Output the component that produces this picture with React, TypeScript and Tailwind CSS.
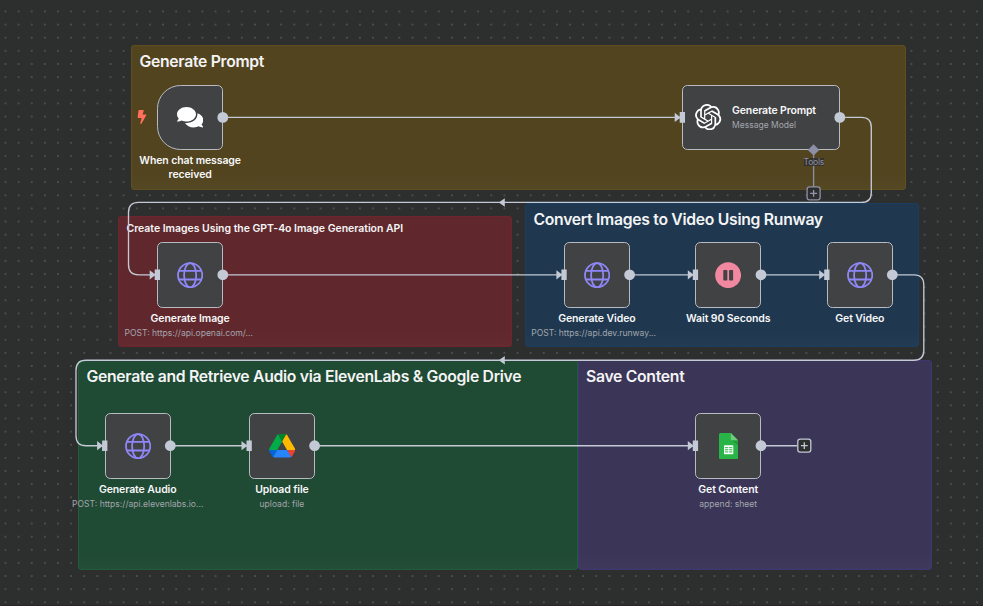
import type { ReactNode } from "react";
import { FaBolt, FaComments } from "react-icons/fa";
import { SiOpenai } from "react-icons/si";

const S = 65.67;

type Box = { x: number; y: number; w: number; h: number };

function Sticky({ x, y, w, h, color, title, small = false }: Box & { color: string; title: string; small?: boolean }) {
  return (
    <section className={`absolute flex flex-col justify-between rounded-[3px] border ${color}`} style={{ left: x, top: y, width: w, height: h }}>
      <h2
        className={`whitespace-nowrap px-[7.5px] font-semibold text-[#f4f4f5] ${
          small ? "pt-[5px] text-[10.5px] leading-[13px] tracking-[-0.04px]" : "pt-[6px] text-[15.75px] leading-[20px] tracking-[-0.3px]"
        }`}
      >
        {title}
      </h2>
      <div className="h-4 bg-linear-to-b from-white/0 to-white/2" />
    </section>
  );
}

function Globe() {
  return (
    <svg viewBox="0 0 26 26" className="size-[26.3px]" fill="none" stroke="#8f87f7" strokeWidth="1.75">
      <circle cx="13" cy="13" r="12" />
      <ellipse cx="13" cy="13" rx="6" ry="12" />
      <path d="M1.8 8.7h22.4M1.8 17.3h22.4" />
    </svg>
  );
}

function Pause() {
  return (
    <svg viewBox="0 0 26 26" className="size-[26.3px]">
      <circle cx="13" cy="13" r="12.8" fill="#f188a2" />
      <rect x="8.2" y="7.9" width="4" height="10.3" rx=".7" fill="#414244" />
      <rect x="13.9" y="7.9" width="4" height="10.3" rx=".7" fill="#414244" />
    </svg>
  );
}

function Drive() {
  return (
    <svg viewBox="0 0 87.3 78" className="w-[26.3px]">
      <path d="m6.6 66.85 3.85 6.65c.8 1.4 1.95 2.5 3.3 3.3l13.75-23.8h-27.5c0 1.55.4 3.1 1.2 4.5z" fill="#0066da" />
      <path d="m43.65 25-13.75-23.8c-1.35.8-2.5 1.9-3.3 3.3l-25.4 44a9.06 9.06 0 0 0 -1.2 4.5h27.5z" fill="#00ac47" />
      <path d="m73.55 76.8c1.35-.8 2.5-1.9 3.3-3.3l1.6-2.75 7.65-13.25c.8-1.4 1.2-2.95 1.2-4.5h-27.502l5.852 11.5z" fill="#ea4335" />
      <path d="m43.65 25 13.75-23.8c-1.35-.8-2.9-1.2-4.5-1.2h-18.5c-1.6 0-3.15.45-4.5 1.2z" fill="#00832d" />
      <path d="m59.8 53h-32.3l-13.75 23.8c1.35.8 2.9 1.2 4.5 1.2h50.8c1.6 0 3.15-.45 4.5-1.2z" fill="#2684fc" />
      <path d="m73.4 26.5-12.7-22c-.8-1.4-1.95-2.5-3.3-3.3l-13.75 23.8 16.15 28h27.45c0-1.55-.4-3.1-1.2-4.5z" fill="#ffba00" />
    </svg>
  );
}

function Sheet() {
  return (
    <svg viewBox="0 0 19.2 26.3" className="h-[26.3px] w-[19.2px]">
      <path d="M1.6 0H11.8L19.2 7.4V24.7a1.6 1.6 0 0 1-1.6 1.6H1.6A1.6 1.6 0 0 1 0 24.7V1.6A1.6 1.6 0 0 1 1.6 0Z" fill="#28b446" />
      <path d="M11.8 0 19.2 7.4H13.2A1.4 1.4 0 0 1 11.8 6Z" fill="#6ace7c" />
      <path d="m12.6 7.4 6.6 5V7.4Z" fill="#219b3b" />
      <rect x="5" y="12.3" width="9.3" height="9" rx=".6" fill="#fff" />
      <path d="M6 14.7h3.3M10.1 14.7h3.3M6 16.8h3.3M10.1 16.8h3.3M6 18.9h3.3M10.1 18.9h3.3" stroke="#28b446" strokeWidth="1" />
    </svg>
  );
}

type NodeSpec = { x: number; y: number; name: ReactNode; sub?: string; icon: ReactNode; trigger?: boolean };

function Node({ x, y, name, sub, icon, trigger }: NodeSpec) {
  return (
    <div className="absolute flex flex-col items-center" style={{ left: x, top: y, width: S }}>
      <div
        className={`flex size-[65.67px] shrink-0 items-center justify-center border-[1.3px] border-[#b9bbc2] bg-[#414244] ${
          trigger ? "rounded-l-[23.6px] rounded-r-[5.3px]" : "rounded-[5.3px]"
        }`}
      >
        {icon}
      </div>
      <div className="mt-[4.3px] whitespace-nowrap text-center text-[10.5px] font-semibold leading-[13.2px] tracking-[-0.1px] text-[#f7f7f8]">
        {name}
      </div>
      {sub && (
        <div
          className={`mt-[1.7px] w-[131.3px] shrink-0 whitespace-nowrap text-[8.57px] leading-[12px] text-[#a3a6ad] ${
            sub.endsWith("...") ? "text-left" : "text-center"
          }`}
        >
          {sub}
        </div>
      )}
    </div>
  );
}

const nodes: NodeSpec[] = [
  { x: 157.3, y: 84.5, name: <>When chat message<br />received</>, icon: <FaComments className="size-[26.3px] text-white" />, trigger: true },
  { x: 157.3, y: 242, name: "Generate Image", sub: "POST: https://api.openai.com/...", icon: <Globe /> },
  { x: 564, y: 242, name: "Generate Video", sub: "POST: https://api.dev.runway...", icon: <Globe /> },
  { x: 695.4, y: 242, name: "Wait 90 Seconds", icon: <Pause /> },
  { x: 827, y: 242, name: "Get Video", icon: <Globe /> },
  { x: 104.9, y: 413, name: "Generate Audio", sub: "POST: https://api.elevenlabs.io...", icon: <Globe /> },
  { x: 249.1, y: 413, name: "Upload file", sub: "upload: file", icon: <Drive /> },
  { x: 695.4, y: 413, name: "Get Content", sub: "append: sheet", icon: <Sheet /> },
];

const edges = [
  "M223 117.4H677",
  "M840 117.4H861.5Q871.3 117.4 871.3 127.4V192.4Q871.3 202.4 861.5 202.4H138.5Q128.5 202.4 128.5 212.4V264.8Q128.5 274.8 138.5 274.8H152",
  "M223 274.8H559",
  "M630 274.8H690",
  "M761 274.8H822",
  "M892.5 274.8H914Q923.8 274.8 923.8 284.8V350.2Q923.8 360.2 914 360.2H86Q76 360.2 76 370.2V435.7Q76 445.7 86 445.7H100",
  "M170.5 445.7H245",
  "M315 445.7H691",
  "M761 445.7H797",
];

const inputs = [
  [682.3, 117.4], [157.3, 274.8], [564, 274.8], [695.4, 274.8], [826.8, 274.8],
  [104.7, 445.7], [249.1, 445.7], [695.4, 445.7],
];

const outputs = [
  [222.8, 117.4], [839.8, 117.4], [222.8, 274.8], [629.6, 274.8], [761, 274.8],
  [892.3, 274.8], [170.3, 445.7], [314.6, 445.7], [761, 445.7],
];

export default function App() {
  return (
    <main className="relative h-[606px] w-[983px] overflow-hidden border-b border-[#2b242a] bg-[#2d2e2e] font-['Inter',sans-serif]">
      <svg className="absolute inset-0 size-full">
        <defs>
          <pattern id="dots" x="-1.1" y="4.9" width="13.13" height="13.13" patternUnits="userSpaceOnUse">
            <circle cx="6.57" cy="6.57" r=".64" fill="#828485" />
          </pattern>
        </defs>
        <rect width="983" height="605" fill="url(#dots)" />
      </svg>

      <Sticky x={131} y={45} w={775} h={144.6} color="border-[#5e4e20] bg-[#51441f]" title="Generate Prompt" />
      <Sticky x={118} y={215.6} w={394} h={131.6} color="border-[#6f252c] bg-[#60272c]" title="Create Images Using the GPT-4o Image Generation API" small />
      <Sticky x={525} y={202.5} w={394} h={144.7} color="border-[#1d3d5f] bg-[#1f3850]" title="Convert Images to Video Using Runway" />
      <Sticky x={78} y={360} w={500} h={210.4} color="border-[#245b3d] bg-[#1f4a33]" title="Generate and Retrieve Audio via ElevenLabs &amp; Google Drive" />
      <Sticky x={577.5} y={360} w={354.3} h={210.4} color="border-[#3f3575] bg-[#3b3658]" title="Save Content" />

      <svg className="absolute inset-0 size-full" fill="none" stroke="#c3c9d5" strokeWidth="1.35">
        {edges.map((d) => (
          <path key={d} d={d} />
        ))}
        <path d="M813.6 150V187" stroke="#8d8fa5" />
        <path d="M504.8 198.2V206.8L498.8 202.5ZM504.8 356V364.6L498.8 360.3Z" fill="#c3c9d5" stroke="none" />
      </svg>

      {nodes.map((n, i) => (
        <Node key={i} {...n} />
      ))}

      <FaBolt className="absolute left-[135px] top-[110px] size-[14px] text-[#ff6f5c]" />

      <div className="absolute left-[682.3px] top-[84.5px] flex h-[65.67px] w-[157.6px] items-center rounded-[5.3px] border-[1.3px] border-[#b9bbc2] bg-[#414244] pl-[12px]">
        <SiOpenai className="size-[26.3px] text-white" />
        <div className="ml-[10.5px] whitespace-nowrap pt-[2px]">
          <div className="text-[10.5px] font-semibold leading-[14px] tracking-[-0.15px] text-[#f7f7f8]">Generate Prompt</div>
          <div className="mt-[1px] text-[8.5px] leading-[13px] text-[#a3a6ad]">Message Model</div>
        </div>
      </div>

      <svg className="absolute inset-0 size-full" fill="#c3c9d5">
        {inputs.map(([x, y]) => (
          <path key={`${x}-${y}`} d={`M${x - 2.6} ${y - 5.3}h5.3v10.6h-5.3zM${x - 7.6} ${y - 4.6}l6 4.6l-6 4.6z`} />
        ))}
        {outputs.map(([x, y]) => (
          <circle key={`${x}-${y}`} cx={x} cy={y} r="5.4" />
        ))}
        <path d="M813.6 144.2l5.7 5.7-5.7 5.7-5.7-5.7z" fill="#8d8fa5" />
        <rect x="807.1" y="186.9" width="13" height="13" rx="2.4" fill="#2d2e2e" stroke="#8d8fa5" strokeWidth="1.3" />
        <path d="M813.6 190v6.8M810.2 193.4h6.8" stroke="#9698b0" strokeWidth="1.3" />
        <rect x="797.8" y="439.2" width="13" height="13" rx="2.4" fill="#2d2e2e" stroke="#c3c9d5" strokeWidth="1.3" />
        <path d="M804.3 442.3v6.8M800.9 445.7h6.8" stroke="#c3c9d5" strokeWidth="1.3" />
      </svg>

      <span className="absolute left-[803.6px] top-[158px] bg-[#2d2e2e]/80 text-[8.5px] leading-[8px] tracking-[-0.2px] text-[#8d8fa5]">Tools</span>
    </main>
  );
}
